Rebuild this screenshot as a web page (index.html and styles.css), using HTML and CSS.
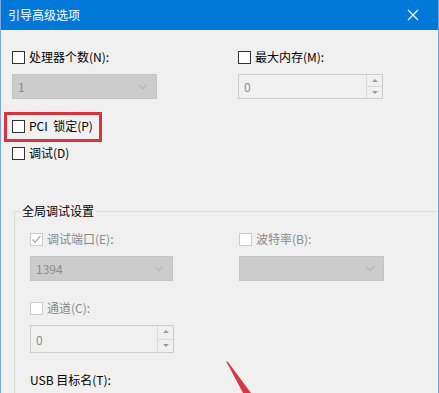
FILE: index.html
```html
<!DOCTYPE html>
<html lang="zh-CN">
<head>
    <meta charset="UTF-8">
    <meta name="viewport" content="width=device-width, initial-scale=1.0">
    <title>引导高级选项</title>
    <link rel="stylesheet" href="styles.css">
</head>
<body>
    <div class="window">
        <div class="titlebar">
            <span class="title">引导高级选项</span>
            <svg class="close" width="12" height="12" viewBox="0 0 12 12">
                <path d="M1 1 L11 11 M11 1 L1 11" stroke="#ffffff" stroke-width="1.2" fill="none"/>
            </svg>
        </div>
        <div class="content">
            <div class="row">
                <div class="col">
                    <label class="check"><span class="box"></span>处理器个数(N):</label>
                    <div class="select disabled wide"><span>1</span><span class="chev"></span></div>
                </div>
                <div class="col">
                    <label class="check"><span class="box"></span>最大内存(M):</label>
                    <div class="spin wide"><span>0</span><span class="arrows"><i class="up"></i><i class="down"></i></span></div>
                </div>
            </div>

            <label class="check pci"><span class="box"></span>PCI&nbsp; 锁定(P)</label>
            <label class="check debug"><span class="box"></span>调试(D)</label>

            <fieldset class="group">
                <legend>全局调试设置</legend>
                <div class="row">
                    <div class="col inner">
                        <label class="check grey"><span class="box checked">
                            <svg width="11" height="11" viewBox="0 0 11 11"><path d="M1.5 5.5 L4.2 8.3 L9.5 1.8" stroke="#a8a8a8" stroke-width="1.3" fill="none"/></svg>
                        </span>调试端口(E):</label>
                        <div class="select disabled"><span>1394</span><span class="chev"></span></div>
                    </div>
                    <div class="col">
                        <label class="check grey"><span class="box light"></span>波特率(B):</label>
                        <div class="select disabled wide"><span></span><span class="chev"></span></div>
                    </div>
                </div>
                <div class="col inner channel">
                    <label class="check grey"><span class="box light"></span>通道(C):</label>
                    <div class="spin narrow"><span>0</span><span class="arrows"><i class="up"></i><i class="down"></i></span></div>
                </div>
                <div class="usb">USB 目标名(T):</div>
                <div class="spin narrow usb-input"></div>
            </fieldset>
        </div>

        <div class="highlight"></div>
        <svg class="arrow" width="439" height="393" viewBox="0 0 439 393">
            <polygon points="226,361 228,362 251,393 243,393" fill="#d9373f"/>
        </svg>
    </div>
</body>
</html>
```

FILE: styles.css
```css
* {
    box-sizing: border-box;
}

body {
    margin: 0;
    font-family: "Noto Sans CJK SC", "Noto Sans", sans-serif;
    font-size: 12px;
    background: #f0f0f0;
}

.window {
    position: relative;
    width: 439px;
    height: 393px;
    overflow: hidden;
    background: #f0f0f0;
    border-left: 1px solid #7aa7e0;
    border-right: 1px solid #7aa7e0;
}

.titlebar {
    height: 30px;
    background: #0078d7;
    color: #ffffff;
    display: flex;
    align-items: center;
    justify-content: space-between;
    padding: 0 19px 0 7px;
}

.title {
    font-size: 12px;
    line-height: 30px;
}

.content {
    padding: 19px 0 0 11px;
}

.row {
    display: flex;
}

.col {
    display: flex;
    flex-direction: column;
    flex: none;
    width: 226px;
}

.check {
    display: flex;
    align-items: center;
    height: 16px;
    color: #000000;
    line-height: 16px;
}

.check .box {
    width: 13px;
    height: 13px;
    border: 1px solid #333333;
    background: #ffffff;
    margin-right: 4px;
    display: flex;
    align-items: center;
    justify-content: center;
}

.check.grey {
    color: #8a8a8a;
}

.check .box.light,
.check .box.checked {
    border-color: #cccccc;
}

.select,
.spin {
    height: 25px;
    margin-top: 9px;
    display: flex;
    align-items: center;
    justify-content: space-between;
    color: #8d8d8d;
    padding-left: 5px;
}

.select {
    width: 143px;
    background: #cccccc;
    border: 1px solid #c4c4c4;
}

.select.wide,
.spin.wide {
    width: 145px;
}

.chev {
    width: 6px;
    height: 6px;
    border-right: 1px solid #b4b4b4;
    border-bottom: 1px solid #b4b4b4;
    transform: rotate(45deg);
    margin: 0 10px 4px 0;
}

.spin {
    background: #f0f0f0;
    border: 1px solid #cccccc;
    padding-right: 0;
}

.spin.narrow {
    width: 144px;
    height: 28px;
}

.arrows {
    display: flex;
    flex-direction: column;
    align-self: stretch;
    width: 16px;
    border-left: 1px solid #dadada;
}

.arrows i {
    flex: 1;
    position: relative;
}

.arrows i::after {
    content: "";
    position: absolute;
    left: 5px;
    border-left: 3px solid transparent;
    border-right: 3px solid transparent;
}

.arrows .up {
    border-bottom: 1px solid #dadada;
}

.arrows .up::after {
    top: 4px;
    border-bottom: 3px solid #9a9a9a;
}

.arrows .down::after {
    top: 4px;
    border-top: 3px solid #9a9a9a;
}

.pci {
    margin-top: 19px;
}

.debug {
    margin-top: 11px;
}

.group {
    margin: 42px 0 0 2px;
    padding: 12px 0 0 15px;
    width: 413px;
    height: 200px;
    border: 1px solid #dcdcdc;
}

.group legend {
    margin-left: -10px;
    padding: 0 2px;
    color: #000000;
    font-size: 12px;
    line-height: 16px;
}

.col.inner {
    width: 209px;
}

.channel {
    margin-top: 19px;
}

.usb {
    margin-top: 19px;
    line-height: 16px;
    color: #000000;
}

.usb-input {
    margin-top: 9px;
}

.highlight {
    position: absolute;
    left: 3px;
    top: 112px;
    width: 98px;
    height: 30px;
    border: 3px solid #d6373f;
}

.arrow {
    position: absolute;
    left: -1px;
    top: 0;
}
```
